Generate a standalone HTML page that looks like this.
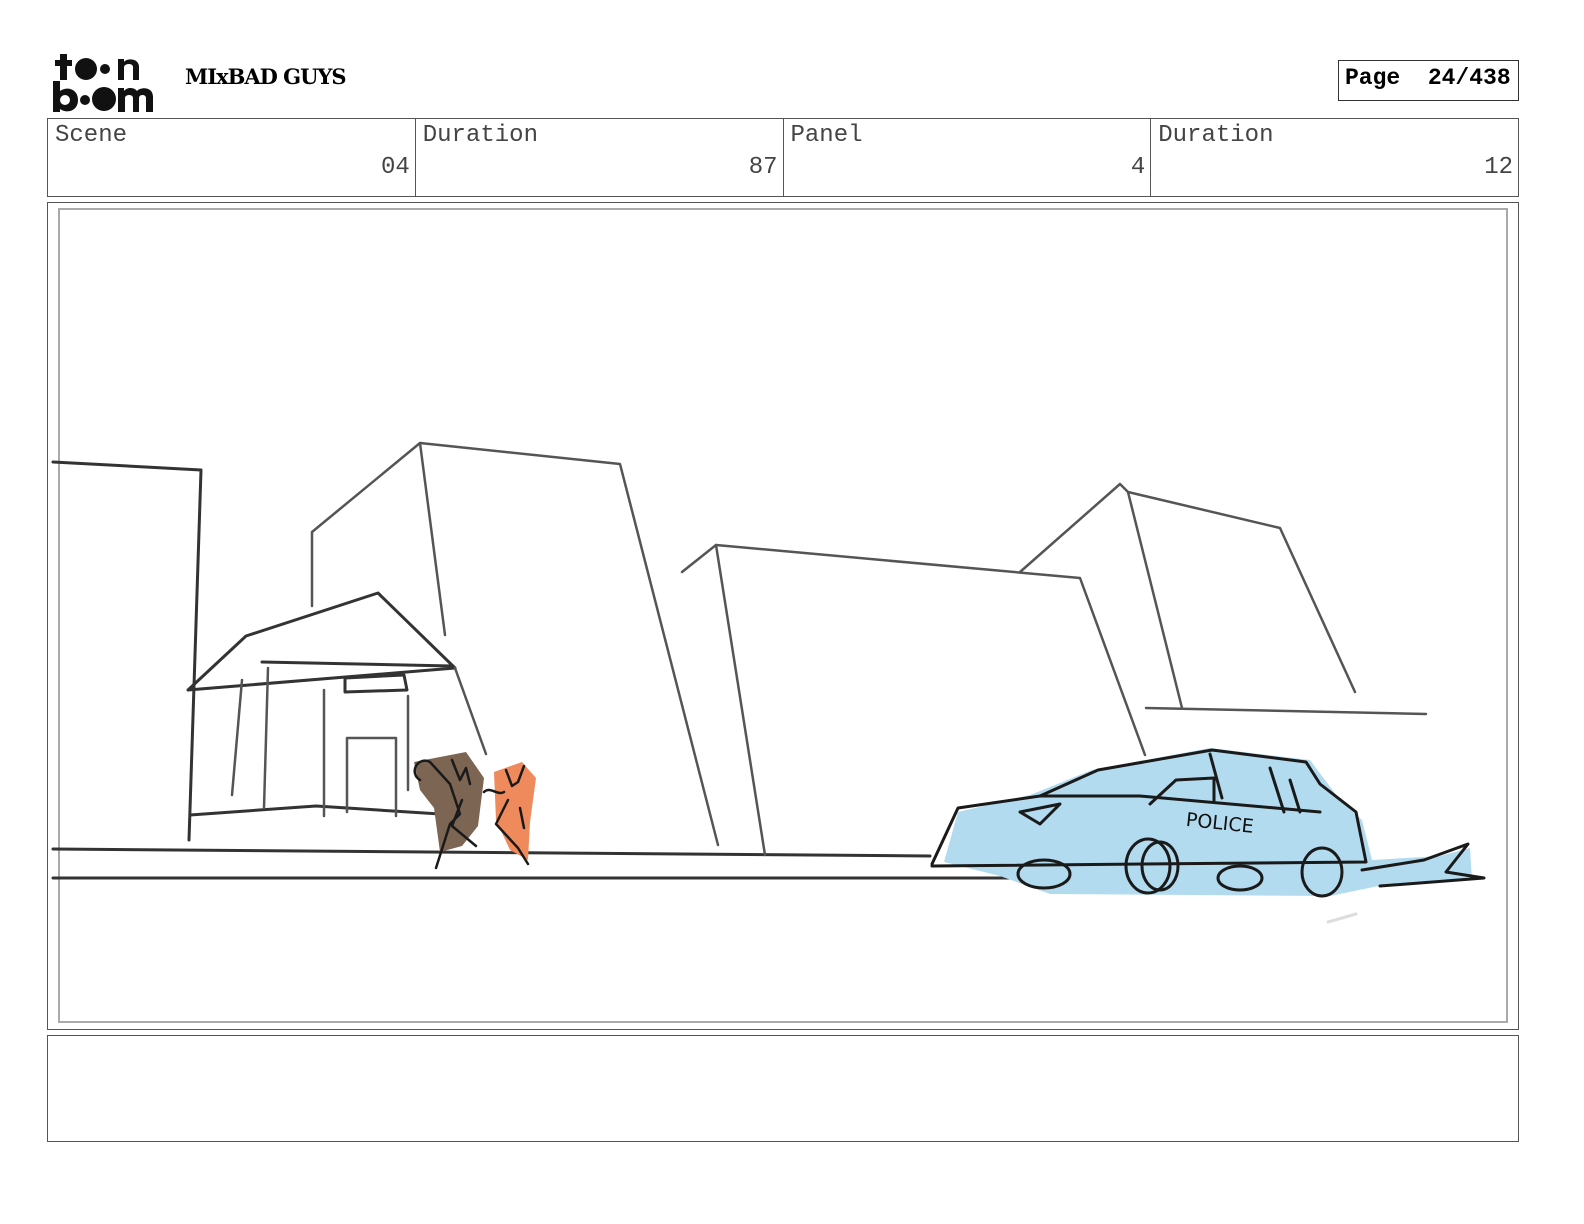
<!DOCTYPE html>
<html><head><meta charset="utf-8">
<style>
*{margin:0;padding:0;box-sizing:border-box}
body{width:1584px;height:1224px;background:#fff;position:relative;font-family:"Liberation Mono",monospace;overflow:hidden}
.abs{position:absolute}
.title{left:185px;top:64px;font-family:"DejaVu Serif","Liberation Serif",serif;font-weight:bold;font-size:21px;letter-spacing:-1px}
.page{left:1338px;top:60px;width:181px;height:41px;border:1px solid #333;font-weight:bold;font-size:23px;padding:4px 0 0 6px;white-space:pre}
.info{left:47px;top:118px;width:1472px;height:79px;border:1px solid #555;display:flex}
.cell{flex:1;border-right:1px solid #555;position:relative}
.cell:last-child{border-right:none}
.lab{position:absolute;left:7px;top:3px;font-size:24px;color:#444}
.val{position:absolute;right:5px;top:35px;font-size:24px;color:#444}
.panel{left:47px;top:202px;width:1472px;height:828px;border:1px solid #555}
.notes{left:47px;top:1035px;width:1472px;height:107px;border:1px solid #555}
</style></head><body>
<svg class="abs" style="left:52px;top:52px" width="112" height="60" viewBox="0 0 112 60">
<g fill="#111">
<rect x="8" y="2" width="7" height="26"/><rect x="3" y="8" width="17" height="6"/>
<circle cx="34" cy="17" r="11"/><circle cx="53" cy="17" r="5"/>
<path d="M66 28V7h6v3c3-4 14-4 15 4v14h-6V15c0-4-8-4-9 0v13z"/>
<path d="M1 29h7v10c7-5 18-2 18 9s-11 14-18 9v3H1z" /><circle cx="13" cy="48" r="5" fill="#fff"/>
<circle cx="33" cy="48" r="5"/><circle cx="52" cy="47" r="12"/>
<path d="M66 60V36h6v3c3-4 10-4 13 0c3-4 16-5 16 6v15h-7V46c0-4-7-4-7 0v14h-6V46c0-4-8-4-8 0v14z"/>
</g></svg>
<div class="abs title">MIxBAD GUYS</div>
<div class="abs page">Page  24/438</div>
<div class="abs info">
<div class="cell"><span class="lab">Scene</span><span class="val">04</span></div>
<div class="cell"><span class="lab">Duration</span><span class="val">87</span></div>
<div class="cell"><span class="lab">Panel</span><span class="val">4</span></div>
<div class="cell"><span class="lab">Duration</span><span class="val">12</span></div>
</div>
<div class="abs panel"></div>
<svg class="abs" style="left:0;top:0" width="1584" height="1224">
<rect x="59" y="209" width="1448" height="813" fill="none" stroke="#aaa" stroke-width="2"/>
<g fill="none" stroke-linecap="round" stroke-linejoin="round">
<g stroke="#333" stroke-width="3">
<path d="M53 462L201 470L189 840"/>
<path d="M53 849L930 856M53 878L1010 878"/>
<path d="M188 690L246 636L378 593L455 668L188 690"/>
<path d="M262 662L452 666M190 815L316 806L440 814"/>
<path d="M345 678L404 675L407 690L345 692z"/>
</g>
<g stroke="#555" stroke-width="2.5">
<path d="M312 606V532L420 443L620 464L718 845"/>
<path d="M420 443L445 635"/>
<path d="M682 572L716 545L1080 578L1145 755"/>
<path d="M716 545L765 855"/>
<path d="M1020 572L1120 484L1128 492L1280 528L1355 692"/>
<path d="M1128 492L1182 708"/>
<path d="M1146 708L1426 714"/>
<path d="M242 680L232 795M268 668L264 808M324 690V816M408 696V790M347 812V738L396 738V816"/>
<path d="M455 668L486 754"/>
</g>
<path d="M944 862L958 812L1030 795L1092 770L1210 748L1310 760L1340 800L1362 820L1372 860L1440 856L1470 848L1472 880L1388 884L1330 896L1050 894L1000 876z" fill="#b3dbef" stroke="none"/>
<g stroke="#1a1a1a" stroke-width="3">
<path d="M932 864L958 808L1040 796L1098 770L1212 750L1306 762L1320 784L1356 812L1366 862L932 866"/>
<path d="M1040 796L1140 796L1320 812M1150 804L1176 780L1214 778L1214 802"/>
<path d="M1210 754L1222 798M1270 768L1284 812M1290 780L1300 812"/>
<path d="M1362 870L1424 860L1468 844L1446 872L1484 878L1380 886"/>
<path d="M1020 812L1060 804L1040 824z"/>
<ellipse cx="1148" cy="866" rx="22" ry="27"/><ellipse cx="1160" cy="866" rx="18" ry="24"/>
<ellipse cx="1322" cy="872" rx="20" ry="24"/>
<ellipse cx="1044" cy="874" rx="26" ry="14"/><ellipse cx="1240" cy="878" rx="22" ry="12"/>
</g>
<path d="M1328 922L1356 914" stroke="#ddd" stroke-width="3"/>
<path d="M414 762L466 752L484 778L478 826L462 846L440 852L434 808L420 790z" fill="#7d6553" stroke="none"/>
<path d="M494 772L522 762L536 778L530 822L528 860L510 850L496 820z" fill="#ef8a5c" stroke="none"/>
<g stroke="#1a1a1a" stroke-width="2.5">
<path d="M420 780a9 9 0 1 1 10 -18l20 22 10 30 -10 10 -14 44"/>
<path d="M452 760l8 20 6 -12 4 16M462 800l-10 26 24 20M484 792c6 -6 14 4 20 0"/>
<path d="M506 770l6 16 6 -4 6 -16M508 800l-12 24 22 24 10 16M520 808l4 20"/>
</g>
</g>
<text x="1186" y="830" font-family="DejaVu Sans,sans-serif" font-size="19" fill="#111" transform="rotate(6 1226 822)">POLICE</text>
</svg>
<div class="abs notes"></div>
</body></html>
